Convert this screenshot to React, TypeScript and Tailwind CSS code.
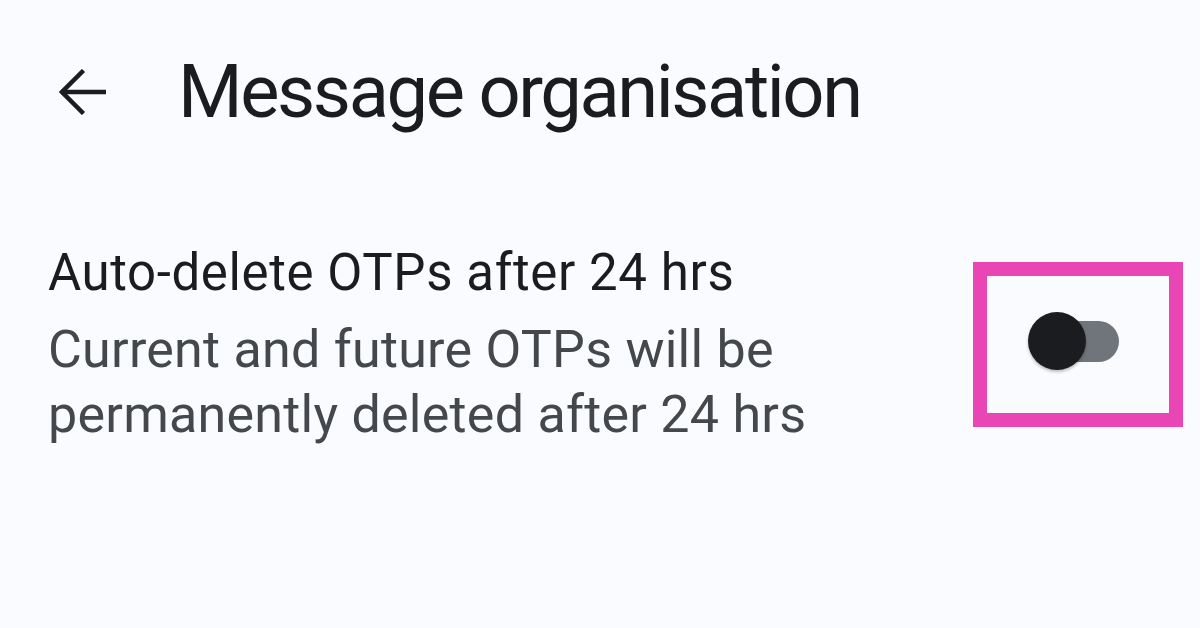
export default function App() {
  return (
    <div
      className="w-[1200px] h-[628px] bg-[#fafbfe] overflow-hidden text-[#1b1c1f]"
      style={{ fontFamily: "Roboto, 'Noto Sans', sans-serif" }}
    >
      {/* Top bar */}
      <div className="flex items-center h-[84px] mt-[50px] pl-[59px]">
        <svg width="48" height="46" viewBox="0 0 48 46" fill="none" className="text-[#1b1c1f]">
          <path d="M2 23H47" stroke="currentColor" strokeWidth="4.5" />
          <path d="M24.5 1.5L3 23L24.5 44.5" stroke="currentColor" strokeWidth="4.5" />
        </svg>
        <h1 className="ml-[71px] text-[74px] leading-none tracking-[-2.4px] font-normal">
          Message organisation
        </h1>
      </div>

      {/* Setting row */}
      <div className="flex items-start justify-between mt-[107px] pl-[48px] pr-[17px]">
        <div className="flex flex-col">
          <div className="text-[51px] leading-[64px] tracking-[0.6px] text-[#1b1c1f]">
            Auto-delete OTPs after 24 hrs
          </div>
          <div className="mt-[12px] text-[52px] leading-[65px] tracking-[0.25px] text-[#44474c]">
            Current and future OTPs will be
            <br />
            permanently deleted after 24 hrs
          </div>
        </div>

        {/* Highlight box with switch */}
        <div className="mt-[21px] w-[210px] h-[165px] border-[14px] border-[#ea45b4] flex items-center pl-[41px] pb-[7px]">
          <div className="relative w-[91px] h-[58px] flex items-center">
            <div className="absolute left-[6px] right-0 h-[41px] rounded-full bg-[#6f757b]" />
            <div className="relative w-[58px] h-[58px] rounded-full bg-[#1a1c1f] shadow-[0_2px_3px_rgba(0,0,0,0.25)]" />
          </div>
        </div>
      </div>
    </div>
  );
}
